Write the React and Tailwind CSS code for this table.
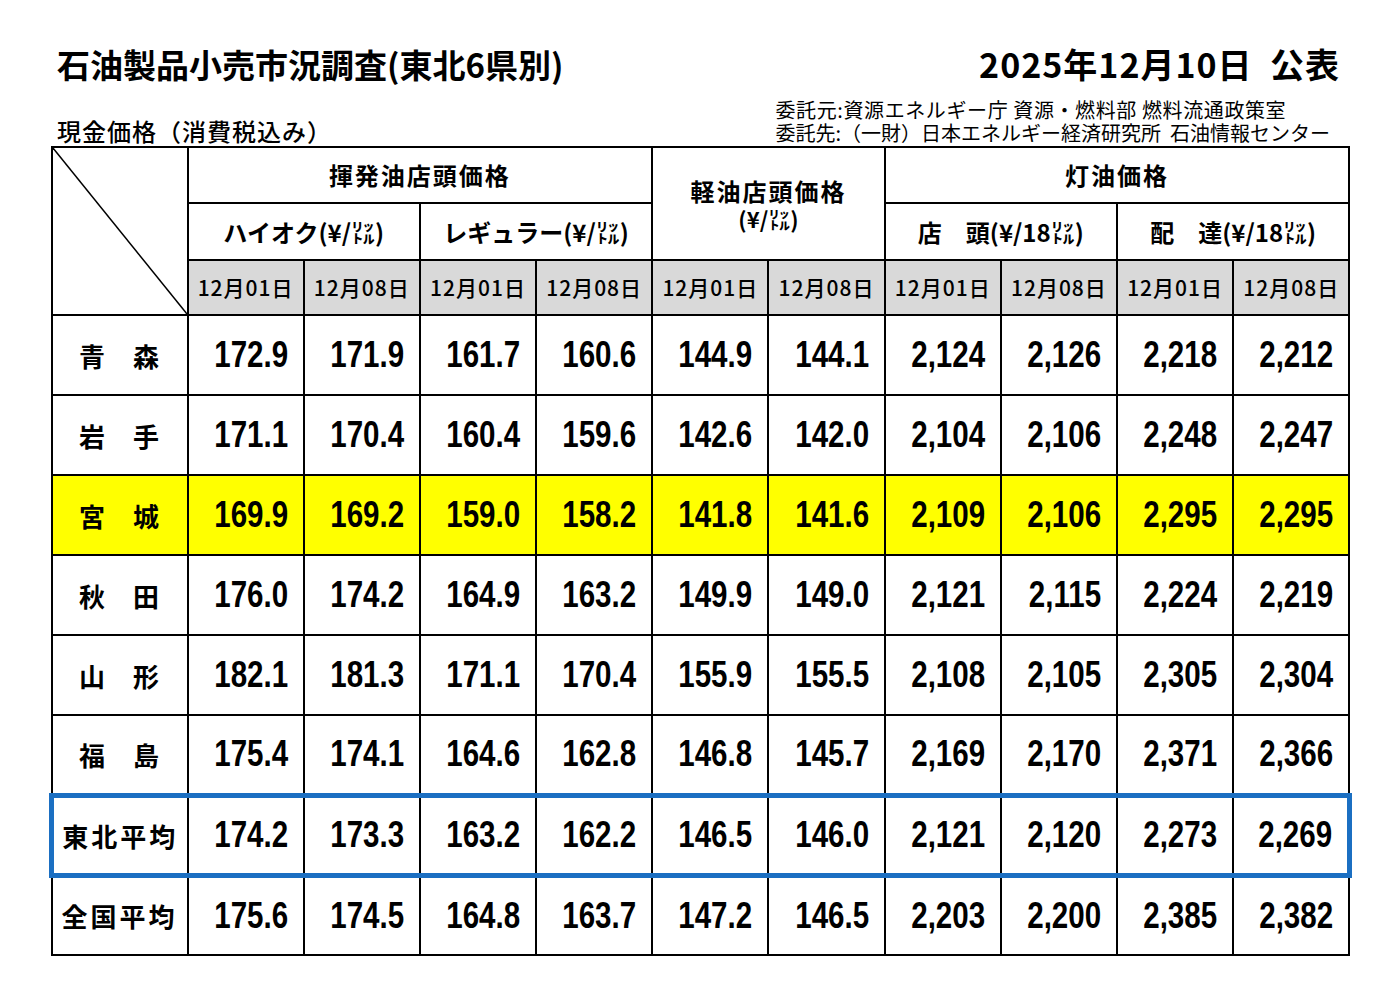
const jp = "font-['Noto_Sans_CJK_JP',sans-serif]";
const num = "font-['Liberation_Sans','Arial',sans-serif]";

const dates = ['12月01日', '12月08日'];

const rows = [
  ['青　森', '172.9', '171.9', '161.7', '160.6', '144.9', '144.1', '2,124', '2,126', '2,218', '2,212'],
  ['岩　手', '171.1', '170.4', '160.4', '159.6', '142.6', '142.0', '2,104', '2,106', '2,248', '2,247'],
  ['宮　城', '169.9', '169.2', '159.0', '158.2', '141.8', '141.6', '2,109', '2,106', '2,295', '2,295'],
  ['秋　田', '176.0', '174.2', '164.9', '163.2', '149.9', '149.0', '2,121', '2,115', '2,224', '2,219'],
  ['山　形', '182.1', '181.3', '171.1', '170.4', '155.9', '155.5', '2,108', '2,105', '2,305', '2,304'],
  ['福　島', '175.4', '174.1', '164.6', '162.8', '146.8', '145.7', '2,169', '2,170', '2,371', '2,366'],
  ['東北平均', '174.2', '173.3', '163.2', '162.2', '146.5', '146.0', '2,121', '2,120', '2,273', '2,269'],
  ['全国平均', '175.6', '174.5', '164.8', '163.7', '147.2', '146.5', '2,203', '2,200', '2,385', '2,382'],
];

function Unit({ pre = '¥/' }) {
  return <span className="font-bold">({pre}㍑)</span>;
}

export default function App() {
  return (
    <div className={`w-[1400px] h-[990px] bg-white text-black px-[51px] pt-[44px] ${jp}`}>
      {/* title line */}
      <div className="flex justify-between items-center pl-[6px] pr-[9px]">
        <h1 className="text-[33px] leading-[40px] font-bold">石油製品小売市況調査(東北6県別)</h1>
        <div className="text-[34px] leading-[40px] font-bold tracking-[1px]">
          2025年12月10日&nbsp;&nbsp;公表
        </div>
      </div>

      <div className="flex justify-between items-end mt-[14px] pl-[6px] pr-[19px]">
        <div className="text-[24px] leading-[26px] font-medium tracking-[1px]">現金価格（消費税込み）</div>
        <div className="text-[20px] leading-[23px]">
          <div className="tracking-[0.6px]">委託元:資源エネルギー庁 資源・燃料部 燃料流通政策室</div>
          <div>委託先:（一財）日本エネルギー経済研究所&nbsp;&nbsp;石油情報センター</div>
        </div>
      </div>

      <table className="table-fixed border-collapse border-2 border-black w-[1298px] mt-[2px] -ml-[2px]">
        <colgroup>
          <col className="w-[136px]" />
          {Array.from({ length: 10 }).map((_, i) => (
            <col key={i} className="w-[116.2px]" />
          ))}
        </colgroup>
        <thead>
          <tr className="h-[56px]">
            <th rowSpan={3} className="relative border-2 border-black p-0">
              <svg className="absolute inset-0 w-full h-full" viewBox="0 0 100 100" preserveAspectRatio="none">
                <line x1="0" y1="0" x2="100" y2="100" stroke="black" strokeWidth="1.5" vectorEffect="non-scaling-stroke" />
              </svg>
            </th>
            <th colSpan={4} className="border-2 border-black text-[24px] font-bold tracking-[2px]">揮発油店頭価格</th>
            <th colSpan={2} rowSpan={2} className="border-2 border-black font-bold">
              <div className="text-[24px] leading-[28px] tracking-[2px]">軽油店頭価格</div>
              <div className="text-[22px] leading-[26px]"><Unit /></div>
            </th>
            <th colSpan={4} className="border-2 border-black text-[24px] font-bold tracking-[2px]">灯油価格</th>
          </tr>
          <tr className="h-[57px]">
            <th colSpan={2} className="border-2 border-black font-bold text-[24px]">
              ハイオク<Unit />
            </th>
            <th colSpan={2} className="border-2 border-black font-bold text-[24px]">
              レギュラー<Unit />
            </th>
            <th colSpan={2} className="border-2 border-black font-bold text-[24px]">
              店　頭<Unit pre="¥/18" />
            </th>
            <th colSpan={2} className="border-2 border-black font-bold text-[24px]">
              配　達<Unit pre="¥/18" />
            </th>
          </tr>
          <tr className="h-[55px]">
            {Array.from({ length: 5 }).flatMap((_, g) =>
              dates.map((d) => (
                <th key={g + d} className="border-2 border-black bg-[#d9d9d9] text-[21px] font-medium tracking-[1px] p-0">
                  {d}
                </th>
              ))
            )}
          </tr>
        </thead>
        <tbody>
          {rows.map((r, ri) => {
            const yellow = ri === 2;
            const blue = ri === 6;
            return (
              <tr key={r[0]} className={`h-[80px] ${yellow ? 'bg-[#ffff00]' : ''}`}>
                <td
                  className={`border-2 border-black text-center text-[26px] font-bold ${r[0].length === 4 ? 'tracking-[3px]' : 'tracking-[1px]'} ${
                    blue ? 'border-y-[5px] border-l-[5px] border-y-[#1b6fc2] border-l-[#1b6fc2]' : ''
                  }`}
                >
                  {r[0]}
                </td>
                {r.slice(1).map((v, i) => (
                  <td
                    key={i}
                    className={`border-2 border-black text-right pr-[15px] text-[36px] font-bold ${num} ${
                      blue ? 'border-y-[5px] border-y-[#1b6fc2]' : ''
                    } ${blue && i === 9 ? 'border-r-[5px] border-r-[#1b6fc2]' : ''}`}
                  >
                    <span className="inline-block origin-right scale-x-[0.82]">{v}</span>
                  </td>
                ))}
              </tr>
            );
          })}
        </tbody>
      </table>
    </div>
  );
}
